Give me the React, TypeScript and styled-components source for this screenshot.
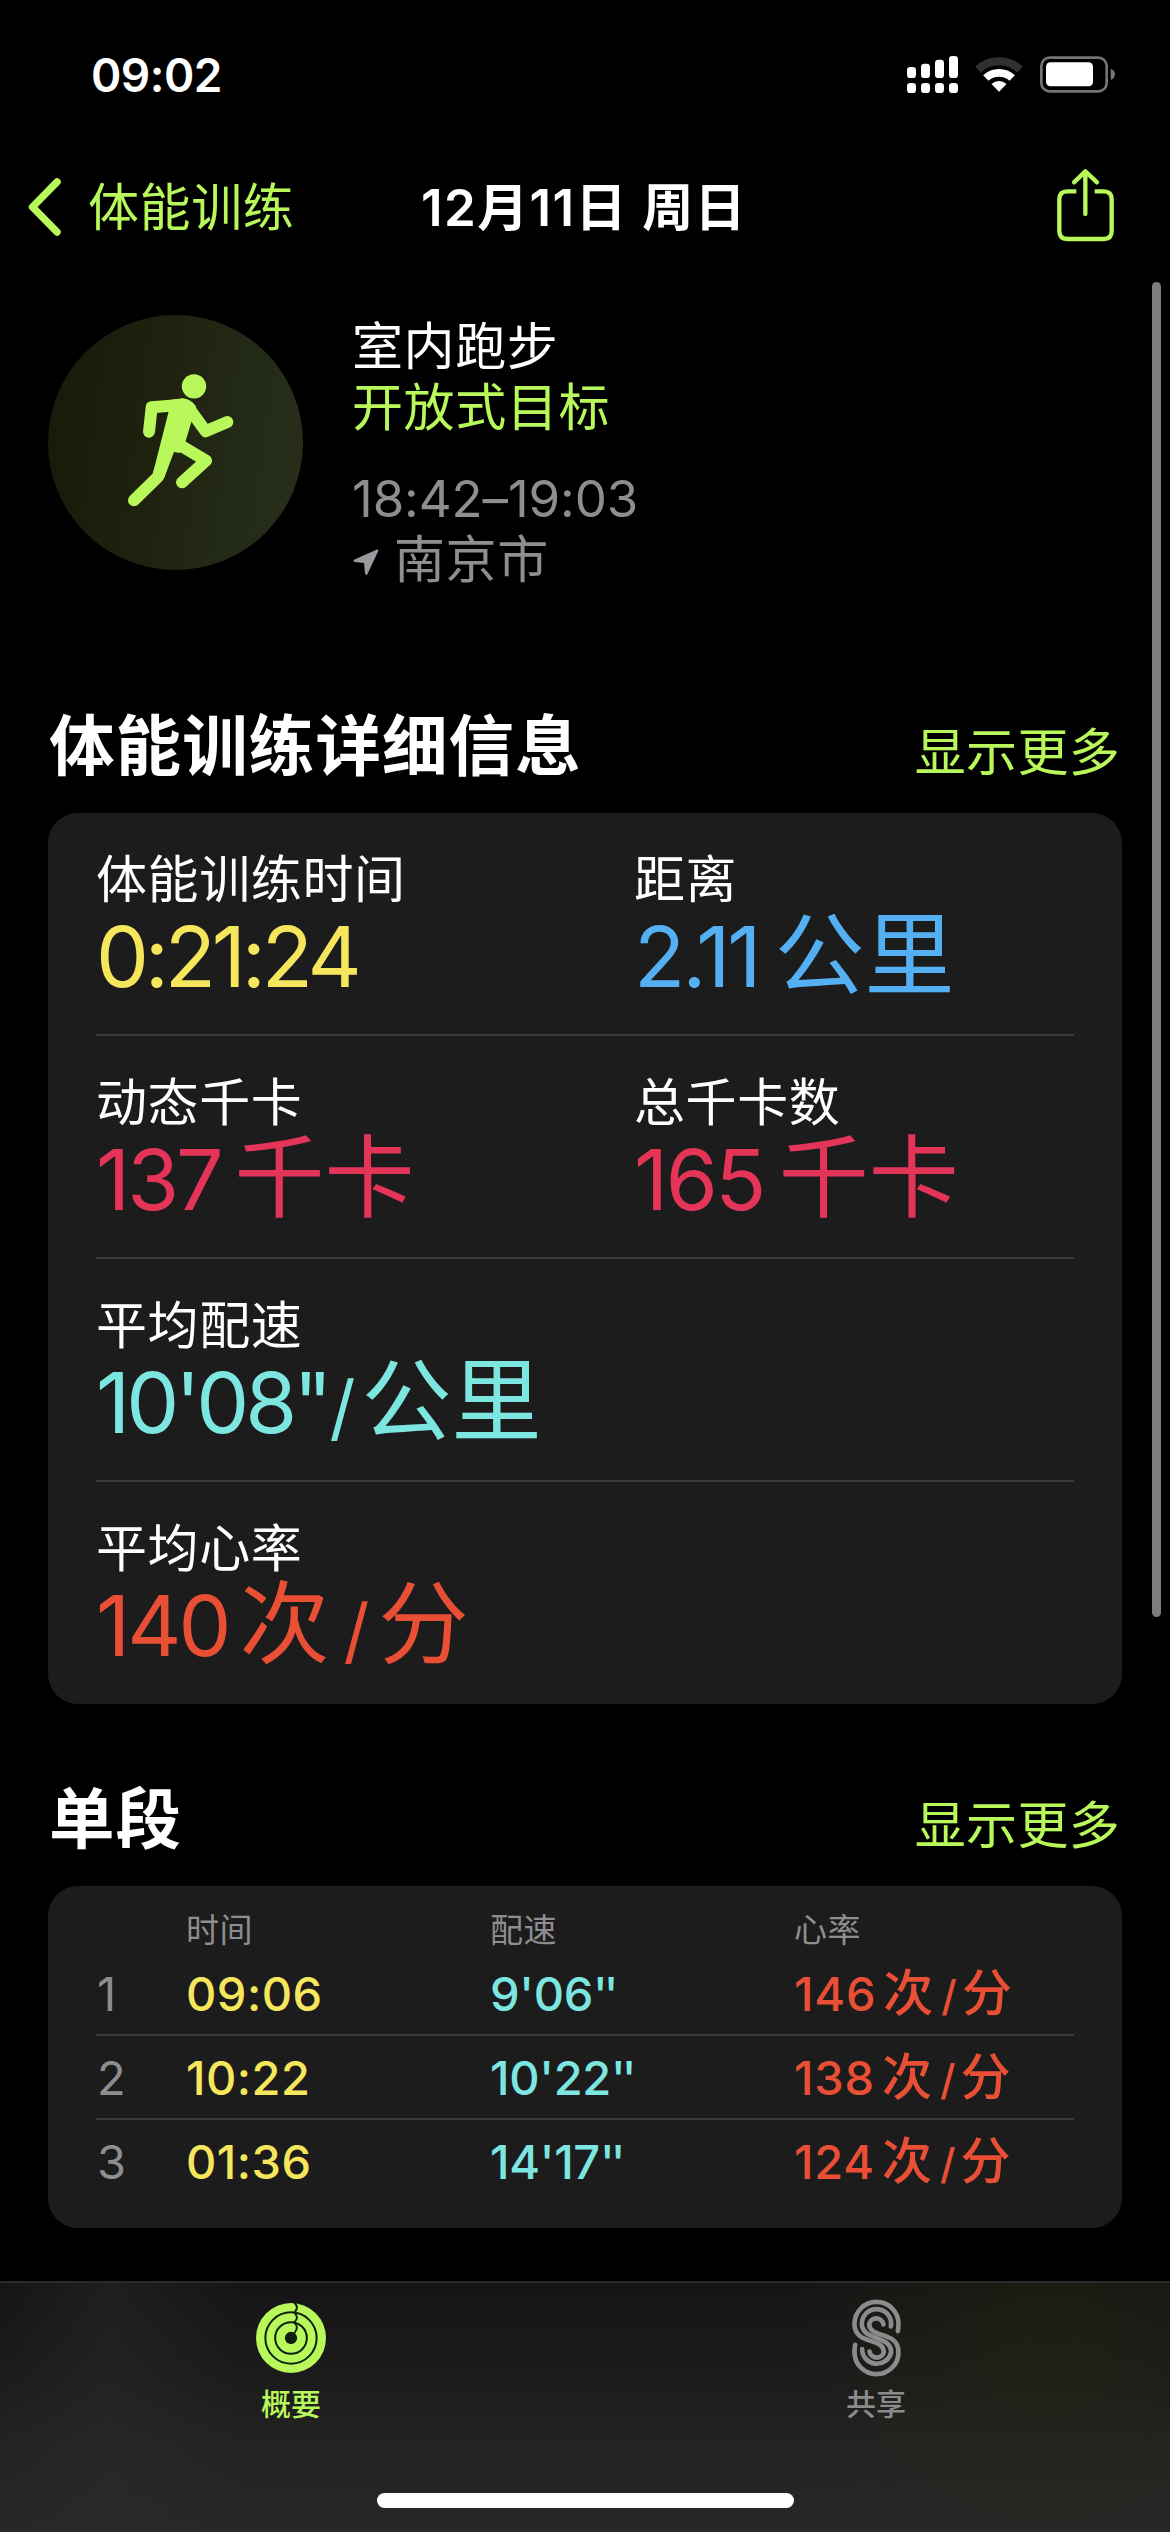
import React from "react";
import styled, { createGlobalStyle } from "styled-components";

const color = {
  accent: "#b9f85a",
  yellow: "#f6e65c",
  blue: "#55b0f3",
  pink: "#e43558",
  cyan: "#7de6e0",
  red: "#e84f35",
  grey: "#8e8e90",
  card: "#1c1c1c",
  line: "#3a3a3b",
};

const Global = createGlobalStyle`
  * { box-sizing: border-box; }
  html, body { margin: 0; padding: 0; background: #000; }
  body {
    width: 1170px;
    height: 2532px;
    overflow: hidden;
    color: #fff;
    font-family: Inter, "Noto Sans CJK SC", sans-serif;
    -webkit-font-smoothing: antialiased;
  }
`;

const Screen = styled.div`
  position: relative;
  display: flex;
  flex-direction: column;
  width: 1170px;
  height: 2532px;
  background: #000;
`;

const StatusBar = styled.header`
  display: flex;
  align-items: center;
  justify-content: space-between;
  height: 132px;
  padding: 17px 55px 0 91px;
`;

const Clock = styled.span`
  font-size: 46px;
  line-height: 56px;
  font-weight: 600;
  letter-spacing: -0.5px;
`;

const StatusIcons = styled.div`
  display: flex;
  align-items: center;
  gap: 17px;
`;

const NavBar = styled.nav`
  display: grid;
  grid-template-columns: 1fr auto 1fr;
  align-items: center;
  height: 150px;
  padding: 0 55px 0 26px;
`;

const BackButton = styled.button`
  display: flex;
  align-items: center;
  gap: 26px;
  padding: 0;
  border: 0;
  background: none;
  color: ${color.accent};
  font: inherit;
  font-size: 51px;
  line-height: 61px;
  letter-spacing: 0.6px;
`;

const NavTitle = styled.h1`
  margin: 0 0 0 27px;
  font-size: 51px;
  line-height: 61px;
  font-weight: 600;
  letter-spacing: 1.4px;
  white-space: nowrap;
`;

const ShareButton = styled.button`
  display: flex;
  justify-self: end;
  padding: 0 0 4px;
  border: 0;
  background: none;
`;

const Content = styled.main`
  display: flex;
  flex-direction: column;
  flex: 1;
  padding: 33px 48px 0;
`;

const Hero = styled.section`
  display: flex;
  gap: 49px;
  height: 275px;
`;

const Badge = styled.div`
  width: 255px;
  height: 255px;
  border-radius: 50%;
  background: linear-gradient(98deg, #191a09 5%, #202210 45%, #232b17 75%, #292e1a 100%);
`;

const HeroText = styled.div`
  display: flex;
  flex-direction: column;
  padding-top: 1px;
`;

const HeroLine = styled.div<{ $tone?: string; $gap?: number; $spacing?: number }>`
  display: flex;
  align-items: center;
  margin-top: ${(p) => p.$gap ?? 0}px;
  font-size: 51px;
  line-height: 61px;
  letter-spacing: ${(p) => p.$spacing ?? 0.6}px;
  color: ${(p) => p.$tone ?? "#fff"};
`;

const Pin = styled.svg`
  margin: 4px 15px 0 1px;
`;

const SectionHeader = styled.div<{ $top: number }>`
  display: flex;
  align-items: flex-end;
  justify-content: space-between;
  margin: ${(p) => p.$top}px 0 27px;
  height: 80px;
`;

const SectionTitle = styled.h2`
  margin: 0 0 -1px 1px;
  font-size: 65.5px;
  line-height: 80px;
  font-weight: 700;
  letter-spacing: 1.1px;
`;

const MoreLink = styled.a`
  margin: 0 2px 3px 0;
  font-size: 51px;
  line-height: 60px;
  letter-spacing: 0.3px;
  color: ${color.accent};
`;

const Card = styled.section`
  border-radius: 30px;
  background: ${color.card};
  padding: 0 48px;
`;

const MetricRow = styled.div`
  display: grid;
  grid-template-columns: 538px 1fr;
  height: 223px;
  padding-top: 36px;
  border-bottom: 2px solid ${color.line};
  &:last-child {
    height: 222px;
    border-bottom: 0;
  }
`;

const MetricLabel = styled.div`
  font-size: 51px;
  line-height: 61px;
  letter-spacing: 0.6px;
`;

const MetricValue = styled.div<{ $tone: string }>`
  display: flex;
  align-items: baseline;
  height: 94px;
  font-size: 84px;
  line-height: 94px;
  white-space: nowrap;
  color: ${(p) => p.$tone};
`;

const Num = styled.span<{ $spacing: number }>`
  letter-spacing: ${(p) => p.$spacing}px;
`;

const Unit = styled.span<{ $left: number; $size?: number }>`
  margin-left: ${(p) => p.$left}px;
  font-size: ${(p) => p.$size ?? 90}px;
  line-height: 0;
`;

const SplitCard = styled(Card)`
  padding: 25px 48px 24px;
`;

const SplitHead = styled.div`
  display: grid;
  grid-template-columns: 90px 304px 304px 1fr;
  height: 41px;
  font-size: 33px;
  line-height: 38px;
  letter-spacing: 0.5px;
  color: ${color.grey};
`;

const SplitRow = styled.div`
  display: grid;
  grid-template-columns: 90px 304px 304px 1fr;
  height: 84px;
  padding-top: 11px;
  font-size: 47px;
  line-height: 62px;
  font-weight: 500;
  border-bottom: 2px solid ${color.line};
  &:last-child {
    border-bottom: 0;
  }
`;

const SplitIndex = styled.span`
  padding-left: 1px;
  font-weight: 400;
  color: ${color.grey};
`;

const SplitCell = styled.span<{ $tone: string }>`
  display: flex;
  align-items: baseline;
  white-space: nowrap;
  color: ${(p) => p.$tone};
`;

const ScrollThumb = styled.div`
  position: absolute;
  top: 282px;
  right: 9px;
  width: 9px;
  height: 1335px;
  border-radius: 5px;
  background: #7d7d7d;
`;

const TabBar = styled.footer`
  display: flex;
  flex-direction: column;
  align-items: center;
  justify-content: space-between;
  height: 251px;
  padding-bottom: 24px;
  border-top: 2px solid #2b2b2b;
  background:
    radial-gradient(ellipse 260px 230px at 1050px 60px, rgba(38, 42, 12, 0.38), transparent),
    linear-gradient(90deg, rgba(40, 40, 40, 0) 0, rgba(44, 44, 44, 0.4) 110px, transparent 240px),
    linear-gradient(180deg, #151515 0%, #1b1b1b 35%, #232323 65%, #272727 100%);
`;

const Tabs = styled.div`
  display: grid;
  grid-template-columns: 582px 588px;
  width: 1170px;
`;

const Tab = styled.div<{ $tone: string }>`
  display: flex;
  flex-direction: column;
  align-items: center;
  padding-top: 16px;
  font-size: 30px;
  line-height: 36px;
  font-weight: 500;
  color: ${(p) => p.$tone};
  svg {
    margin-bottom: 9px;
  }
`;

const HomeIndicator = styled.div`
  width: 417px;
  height: 15px;
  border-radius: 8px;
  background: #fff;
`;

const Signal = () => (
  <svg width="51" height="37" viewBox="0 0 153 111" fill="#fff">
    <rect x="0" y="33" width="27" height="33" rx="10" />
    <rect x="42" y="23" width="27" height="43" rx="10" />
    <rect x="84" y="11" width="27" height="55" rx="10" />
    <rect x="126" y="0" width="27" height="66" rx="10" />
    {[0, 42, 84, 126].map((x) => (
      <rect key={x} x={x} y="81" width="27" height="30" rx="10" />
    ))}
  </svg>
);

const Wifi = () => (
  <svg width="48" height="37" viewBox="0 0 144 111" fill="none">
    <path d="M8.6 40.5A93 93 0 0 1 135.400 40.5" stroke="#303030" strokeWidth="24" />
    <path d="M32.4 66A58 58 0 0 1 111.600 66" stroke="#fff" strokeWidth="23" />
    <path d="M72 107L49.500 84A33 33 0 0 1 94.500 84Z" fill="#fff" />
  </svg>
);

const Battery = () => (
  <svg width="75" height="37" viewBox="0 0 225 111" fill="none">
    <rect x="4" y="5" width="196" height="101" rx="25" stroke="#747474" strokeWidth="8" />
    <rect x="18" y="19" width="141" height="72" rx="13" fill="#fff" />
    <path d="M212 38q13 5 13 17t-13 17z" fill="#747474" />
  </svg>
);

const Chevron = () => (
  <svg width="36" height="60" viewBox="0 0 36 60" fill="none">
    <path d="M31 5L6.500 30L31 55" stroke={color.accent} strokeWidth="7.500" strokeLinecap="round" strokeLinejoin="round" />
  </svg>
);

const ShareIcon = () => (
  <svg
    width="58"
    height="74"
    viewBox="500 414 174 222"
    fill="none"
    stroke={color.accent}
    strokeWidth="13"
    strokeLinejoin="round"
  >
    <path d="M558 484H531Q507 484 507 508V603Q507 627 531 627H640Q664 627 664 603V508Q664 484 640 484H613" />
    <path d="M585 425V552M551 457L585 424L620 457" strokeLinecap="round" />
  </svg>
);

const Runner = () => (
  <svg width="255" height="255" viewBox="24 14 765 765" fill="none">
    <circle cx="462" cy="228" r="36.500" fill={color.accent} />
    <path
      d="M387 300L395 268L428 264Q452 266 468 288L455 332L437 392L420 428L402 425L371 507L338 492Z"
      fill={color.accent}
    />
    <g stroke={color.accent} strokeWidth="36" strokeLinecap="round" strokeLinejoin="round">
      <path d="M327 364L335 291L428 283" />
      <path d="M446 292L497 363L562 335" />
      <path d="M416 402L498 451L426 516" />
      <path d="M392 385L354 499L282 570" />
    </g>
  </svg>
);

const Rings = () => (
  <svg width="70" height="78" viewBox="167 90 210 234" fill="none">
    <circle cx="272" cy="207" r="105" fill={color.accent} />
    <g stroke="#0c2210" strokeWidth="6">
      <circle cx="272" cy="207" r="77" />
      <circle cx="272" cy="207" r="47.500" />
      <path d="M282 101Q297 114 283 130" />
      <path d="M281 130Q299 146 281 160" />
      <path d="M281 160Q298 174 282 192" />
    </g>
    <circle cx="272" cy="207" r="18.500" fill="#10200f" />
  </svg>
);

const SharingMark = () => (
  <svg width="49" height="78" viewBox="185.500 91.500 147 234" fill="none" stroke="#8b8b8b" strokeWidth="14" strokeLinecap="round">
    <path d="M323 188Q325 178 325 166A66 66 0 0 0 193 166C193 232 281 205 281 251A22 22 0 0 1 238 249" />
    <path d="M302 174L303 166A44 44 0 0 0 215 166C215 217 303 200 303 251A44 44 0 0 1 216 242" />
    <path d="M280 168A22 22 0 0 0 237 166C237 212 325 185 325 251A66 66 0 0 1 193 251Q193 239 195 229" />
  </svg>
);

type Value = { num: string; spacing: number; units: { text: string; left: number; size?: number }[] };
type Metric = { label: string; tone: string; value: Value };

const metrics: Metric[][] = [
  [
    { label: "体能训练时间", tone: color.yellow, value: { num: "0:21:24", spacing: -4.2, units: [] } },
    { label: "距离", tone: color.blue, value: { num: "2.11", spacing: -3, units: [{ text: "公里", left: 16 }] } },
  ],
  [
    { label: "动态千卡", tone: color.pink, value: { num: "137", spacing: -3, units: [{ text: "千卡", left: 14 }] } },
    { label: "总千卡数", tone: color.pink, value: { num: "165", spacing: -2.5, units: [{ text: "千卡", left: 15 }] } },
  ],
  [
    {
      label: "平均配速",
      tone: color.cyan,
      value: { num: "10'08\"", spacing: -4, units: [{ text: "/", left: 1, size: 72 }, { text: "公里", left: 6 }] },
    },
  ],
  [
    {
      label: "平均心率",
      tone: color.red,
      value: {
        num: "140",
        spacing: -3,
        units: [
          { text: "次", left: 11 },
          { text: "/", left: 14, size: 72 },
          { text: "分", left: 9 },
        ],
      },
    },
  ],
];

const splits = [
  { time: "09:06", pace: "9'06", rate: "146" },
  { time: "10:22", pace: "10'22", rate: "138" },
  { time: "01:36", pace: "14'17", rate: "124" },
];

export default function App() {
  return (
    <Screen>
      <Global />
      <StatusBar>
        <Clock>09:02</Clock>
        <StatusIcons>
          <Signal />
          <Wifi />
          <Battery />
        </StatusIcons>
      </StatusBar>
      <NavBar>
        <BackButton>
          <Chevron />
          体能训练
        </BackButton>
        <NavTitle>12月11日 周日</NavTitle>
        <ShareButton aria-label="分享">
          <ShareIcon />
        </ShareButton>
      </NavBar>
      <Content>
        <Hero>
          <Badge>
            <Runner />
          </Badge>
          <HeroText>
            <HeroLine>室内跑步</HeroLine>
            <HeroLine $tone={color.accent}>开放式目标</HeroLine>
            <HeroLine $tone={color.grey} $gap={30} $spacing={-0.1}>
              18:42–19:03
            </HeroLine>
            <HeroLine $tone={color.grey}>
              <Pin width="26" height="28" viewBox="0 0 26 28" fill="#98989f">
                <path d="M24 1.500Q26 1 25 3.500L14.500 26Q13 28 12 25.500L11 15L2 14Q-1 13 1.500 11.500Z" />
              </Pin>
              南京市
            </HeroLine>
          </HeroText>
        </Hero>
        <SectionHeader $top={116}>
          <SectionTitle>体能训练详细信息</SectionTitle>
          <MoreLink>显示更多</MoreLink>
        </SectionHeader>
        <Card>
          {metrics.map((row, i) => (
            <MetricRow key={i}>
              {row.map((m) => (
                <div key={m.label}>
                  <MetricLabel>{m.label}</MetricLabel>
                  <MetricValue $tone={m.tone}>
                    <Num $spacing={m.value.spacing}>{m.value.num}</Num>
                    {m.value.units.map((u) => (
                      <Unit key={u.text} $left={u.left} $size={u.size}>
                        {u.text}
                      </Unit>
                    ))}
                  </MetricValue>
                </div>
              ))}
            </MetricRow>
          ))}
        </Card>
        <SectionHeader $top={75}>
          <SectionTitle>单段</SectionTitle>
          <MoreLink>显示更多</MoreLink>
        </SectionHeader>
        <SplitCard>
          <SplitHead>
            <span />
            <span>时间</span>
            <span>配速</span>
            <span>心率</span>
          </SplitHead>
          {splits.map((s, i) => (
            <SplitRow key={s.time}>
              <SplitIndex>{i + 1}</SplitIndex>
              <SplitCell $tone={color.yellow}>
                <Num $spacing={0.5}>{s.time}</Num>
              </SplitCell>
              <SplitCell $tone={color.cyan}>
                <Num $spacing={-0.3}>{s.pace}</Num>
                <Num $spacing={-4}>''</Num>
              </SplitCell>
              <SplitCell $tone={color.red}>
                <Num $spacing={0.8}>{s.rate}</Num>
                <Unit $left={7} $size={50}>次</Unit>
                <Unit $left={8} $size={42}>/</Unit>
                <Unit $left={5} $size={50}>分</Unit>
              </SplitCell>
            </SplitRow>
          ))}
        </SplitCard>
      </Content>
      <ScrollThumb />
      <TabBar>
        <Tabs>
          <Tab $tone={color.accent}>
            <Rings />
            概要
          </Tab>
          <Tab $tone="#8b8b8b">
            <SharingMark />
            共享
          </Tab>
        </Tabs>
        <HomeIndicator />
      </TabBar>
    </Screen>
  );
}
